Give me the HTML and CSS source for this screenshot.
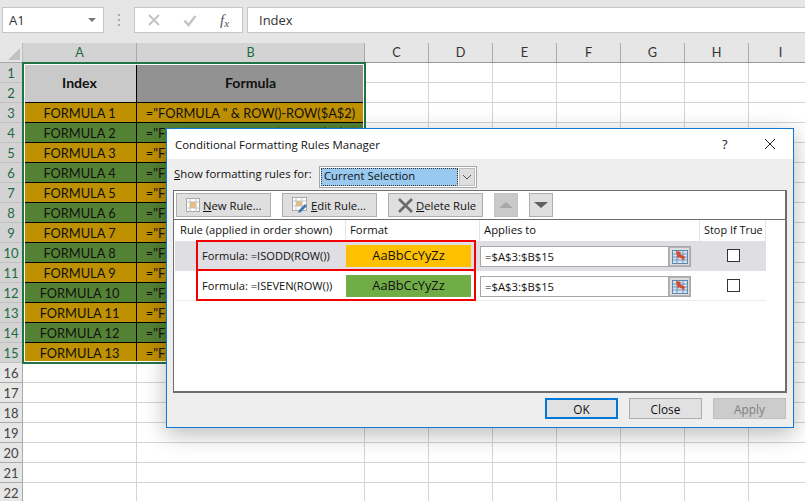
FILE: index.html
```html
<!DOCTYPE html>
<html lang="en">
<head>
<meta charset="utf-8">
<title>Conditional Formatting Rules Manager</title>
<link rel="stylesheet" href="styles.css">
</head>
<body>
<div class="app">
  <header class="formula-bar">
    <div class="name-box"><span>A1</span><i class="caret"></i></div>
    <div class="grip"><i></i><i></i><i></i></div>
    <div class="fx-box">
      <svg class="fx-icon" width="14" height="14" viewBox="0 0 14 14"><path d="M2 2l10 10M12 2L2 12" stroke="#c4c4c4" stroke-width="2" fill="none"/></svg>
      <svg class="fx-icon" width="14" height="14" viewBox="0 0 14 14"><path d="M1.500 7.500l4 4.500 7-9" stroke="#c4c4c4" stroke-width="2.500" fill="none"/></svg>
      <span class="fx">f<sub>x</sub></span>
    </div>
    <div class="formula-input">Index</div>
  </header>

  <main class="sheet">
    <div class="corner"><i></i></div>
    <div class="ch sel">A</div><div class="ch sel">B</div>
    <div class="ch-rest"><span>C</span><span>D</span><span>E</span><span>F</span><span>G</span><span>H</span><span>I</span></div>

    <div class="rh sel">1</div>
    <div class="c head-a span2">Index</div><div class="c head-b span2">Formula</div><div class="rest"></div>
    <div class="rh sel">2</div><div class="rest"></div>

    <div class="rh sel">3</div><div class="c gold">FORMULA 1</div><div class="c gold">="FORMULA " &amp; ROW()-ROW($A$2)</div><div class="rest"></div>
    <div class="rh sel">4</div><div class="c green">FORMULA 2</div><div class="c green">="FORMULA " &amp; ROW()-ROW($A$2)</div><div class="rest"></div>
    <div class="rh sel">5</div><div class="c gold">FORMULA 3</div><div class="c gold">="FORMULA " &amp; ROW()-ROW($A$2)</div><div class="rest"></div>
    <div class="rh sel">6</div><div class="c green">FORMULA 4</div><div class="c green">="FORMULA " &amp; ROW()-ROW($A$2)</div><div class="rest"></div>
    <div class="rh sel">7</div><div class="c gold">FORMULA 5</div><div class="c gold">="FORMULA " &amp; ROW()-ROW($A$2)</div><div class="rest"></div>
    <div class="rh sel">8</div><div class="c green">FORMULA 6</div><div class="c green">="FORMULA " &amp; ROW()-ROW($A$2)</div><div class="rest"></div>
    <div class="rh sel">9</div><div class="c gold">FORMULA 7</div><div class="c gold">="FORMULA " &amp; ROW()-ROW($A$2)</div><div class="rest"></div>
    <div class="rh sel">10</div><div class="c green">FORMULA 8</div><div class="c green">="FORMULA " &amp; ROW()-ROW($A$2)</div><div class="rest"></div>
    <div class="rh sel">11</div><div class="c gold">FORMULA 9</div><div class="c gold">="FORMULA " &amp; ROW()-ROW($A$2)</div><div class="rest"></div>
    <div class="rh sel">12</div><div class="c green">FORMULA 10</div><div class="c green">="FORMULA " &amp; ROW()-ROW($A$2)</div><div class="rest"></div>
    <div class="rh sel">13</div><div class="c gold">FORMULA 11</div><div class="c gold">="FORMULA " &amp; ROW()-ROW($A$2)</div><div class="rest"></div>
    <div class="rh sel">14</div><div class="c green">FORMULA 12</div><div class="c green">="FORMULA " &amp; ROW()-ROW($A$2)</div><div class="rest"></div>
    <div class="rh sel">15</div><div class="c gold">FORMULA 13</div><div class="c gold">="FORMULA " &amp; ROW()-ROW($A$2)</div><div class="rest"></div>

    <div class="rh">16</div><div class="c"></div><div class="c"></div><div class="rest"></div>
    <div class="rh">17</div><div class="c"></div><div class="c"></div><div class="rest"></div>
    <div class="rh">18</div><div class="c"></div><div class="c"></div><div class="rest"></div>
    <div class="rh">19</div><div class="c"></div><div class="c"></div><div class="rest"></div>
    <div class="rh">20</div><div class="c"></div><div class="c"></div><div class="rest"></div>
    <div class="rh">21</div><div class="c"></div><div class="c"></div><div class="rest"></div>
    <div class="rh">22</div><div class="c"></div><div class="c"></div><div class="rest"></div>

    <div class="selection"></div>
  </main>

  <section class="dialog">
    <div class="titlebar">
      <span class="title">Conditional Formatting Rules Manager</span>
      <span class="help">?</span>
      <svg class="close-x" width="12" height="12" viewBox="0 0 12 12"><path d="M1 1l10 10M11 1L1 11" stroke="#222" stroke-width="1" fill="none"/></svg>
    </div>
    <div class="dialog-body">
      <div class="show-row">
        <label class="show-label"><u>S</u>how formatting rules for:</label>
        <div class="select">
          <span class="select-value">Current Selection</span>
          <span class="select-btn"><svg width="10" height="6" viewBox="0 0 10 6"><path d="M1 1l4 4 4-4" stroke="#555" fill="none"/></svg></span>
        </div>
      </div>

      <div class="panel">
        <div class="toolbar">
          <button class="tbtn">
            <svg width="14" height="14" viewBox="0 0 14 14"><rect x="0.500" y="0.500" width="13" height="13" fill="#fff" stroke="#a8a8a8"/><rect x="4" y="4" width="6" height="6" fill="#e8bd72"/><path d="M0.500 4h13M0.500 10h13M4 .5v13M10 .5v13" stroke="#c4c4c4"/></svg>
            <span><u>N</u>ew Rule...</span>
          </button>
          <button class="tbtn">
            <svg width="16" height="16" viewBox="0 0 16 16"><rect x="0.500" y="0.500" width="14" height="13" fill="#fff" stroke="#a8a8a8"/><rect x="4" y="4" width="6" height="5" fill="#e8bd72"/><path d="M0.500 4h14M0.500 9h14M4 .5v13M10 .5v13" stroke="#c4c4c4"/><path d="M6 16l1-3 6-6 2 2-6 6z" fill="#3f78b5"/></svg>
            <span><u>E</u>dit Rule...</span>
          </button>
          <button class="tbtn">
            <svg width="15" height="15" viewBox="0 0 15 15"><path d="M1 1l13 13M14 1L1 14" stroke="#6b6b6b" stroke-width="2.600" fill="none"/></svg>
            <span><u>D</u>elete Rule</span>
          </button>
          <button class="abtn off"><i class="tri up"></i></button>
          <button class="abtn"><i class="tri down"></i></button>
        </div>

        <div class="rules">
          <div class="th">Rule (applied in order shown)</div>
          <div class="th">Format</div>
          <div class="th">Applies to</div>
          <div class="th">Stop If True</div>

          <div class="td current rule">Formula: =ISODD(ROW())</div>
          <div class="td current"><div class="swatch amber">AaBbCcYyZz</div></div>
          <div class="td current"><div class="range"><span class="range-text">=$A$3:$B$15</span><span class="range-btn"><svg width="16" height="14" viewBox="0 0 16 14"><rect x="0.500" y="0.500" width="15" height="13" fill="#d5e4f0" stroke="#5e87ab"/><path d="M.5 4h15M.5 7h15M.5 10h15M5 .5v13M11 .5v13" stroke="#6f97ba"/><path d="M4 1l5 1-1 2 5 3-1 3-5-3-1 2z" fill="#d8482a"/></svg></span></div></div>
          <div class="td current center"><i class="check"></i></div>

          <div class="td rule">Formula: =ISEVEN(ROW())</div>
          <div class="td"><div class="swatch leaf">AaBbCcYyZz</div></div>
          <div class="td"><div class="range"><span class="range-text">=$A$3:$B$15</span><span class="range-btn"><svg width="16" height="14" viewBox="0 0 16 14"><rect x="0.500" y="0.500" width="15" height="13" fill="#d5e4f0" stroke="#5e87ab"/><path d="M.5 4h15M.5 7h15M.5 10h15M5 .5v13M11 .5v13" stroke="#6f97ba"/><path d="M4 1l5 1-1 2 5 3-1 3-5-3-1 2z" fill="#d8482a"/></svg></span></div></div>
          <div class="td center"><i class="check"></i></div>
        </div>
      </div>

      <div class="actions">
        <button class="btn primary">OK</button>
        <button class="btn">Close</button>
        <button class="btn disabled">Apply</button>
      </div>
    </div>
    <div class="mark mark-one"></div>
    <div class="mark mark-two"></div>
  </section>
</div>
</body>
</html>
```
FILE: styles.css
```css
* { box-sizing: border-box; }
html, body { margin: 0; padding: 0; }
body { width: 805px; height: 501px; overflow: hidden; background: #fff; }
.app { position: relative; width: 805px; height: 501px; overflow: hidden; font-family: "Lato", "Liberation Sans", sans-serif; color: #111; }

/* Formula bar */
.formula-bar { height: 43px; background: #e6e6e6; display: flex; align-items: flex-start; padding: 7px 0 0 2px; }
.name-box { width: 102px; height: 26px; background: #fff; border: 1px solid #c6c6c6; display: flex; align-items: center; justify-content: space-between; padding: 0 7px 0 6px; font: 13px "Open Sans", sans-serif; color: #333; }
.caret { width: 0; height: 0; border-left: 4px solid transparent; border-right: 4px solid transparent; border-top: 4px solid #777; }
.grip { width: 30px; display: flex; flex-direction: column; align-items: center; gap: 3px; padding-top: 7px; }
.grip i { width: 2px; height: 2px; background: #aaa; }
.fx-box { width: 109px; height: 26px; background: #fff; border: 1px solid #c6c6c6; display: flex; align-items: center; padding-left: 12px; gap: 22px; }
.fx { font: italic 15px "Liberation Serif", serif; color: #555; margin-left: 1px; }
.fx sub { font-size: 11px; vertical-align: -2px; line-height: 0; }
.formula-input { flex: 1; height: 26px; margin-left: 4px; background: #fff; border: 1px solid #c6c6c6; border-right: 0; padding-left: 11px; font: 13px/24px "Open Sans", sans-serif; color: #333; }

/* Sheet */
.sheet { position: relative; display: grid; grid-template-columns: 23px 114px 228px 440px; grid-template-rows: repeat(23, 20px); font-size: 12.800px; }
.corner { background: #e6e6e6; border-bottom: 1px solid #aaa; border-right: 1px solid #bbb; position: relative; }
.corner i { position: absolute; right: 2px; bottom: 2px; width: 0; height: 0; border-left: 12px solid transparent; border-bottom: 12px solid #c2c2c2; }
.ch { background: #e6e6e6; border-bottom: 1px solid #999; border-right: 1px solid #aaa; text-align: center; line-height: 19px; color: #333; font-size: 12.700px; }
.ch.sel { background: #d3d3d3; color: #1d6a43; }
.ch-rest { background: #e6e6e6; border-bottom: 1px solid #999; display: grid; grid-template-columns: repeat(7, 64px); overflow: hidden; }
.ch-rest span { border-right: 1px solid #aaa; text-align: center; line-height: 19px; color: #333; font-size: 12.700px; }
.rh { background: #e6e6e6; border-right: 1px solid #aaa; border-bottom: 1px solid #aaa; text-align: center; line-height: 20px; color: #444; font-size: 13px; }
.rh.sel { background: #d3d3d3; color: #1d6a43; border-bottom-color: #c0c0c0; }
.c { border-right: 1px solid #d4d4d4; border-bottom: 1px solid #d4d4d4; text-align: center; line-height: 20px; white-space: nowrap; overflow: hidden; color: #111; }
.span2 { grid-row: span 2; line-height: 39px; font-size: 14.100px; font-weight: 700; border-color: #000; }
.head-a { background: #c9c9c9; }
.head-b { background: #929292; }
.gold { background: #bf9000; border-color: #000; }
.green { background: #548235; border-color: #000; }
.rest { border-bottom: 1px solid #d4d4d4; background-image: repeating-linear-gradient(to right, transparent 0, transparent 63px, #d4d4d4 63px, #d4d4d4 64px); }
.selection { position: absolute; left: 22px; top: 19px; width: 344px; height: 302px; border: 2px solid #217346; box-shadow: inset 0 0 0 1px #fff; pointer-events: none; }

/* Dialog */
.dialog { position: absolute; left: 166px; top: 128px; width: 628px; height: 300px; background: #eee; border: 1px solid #0f7ad6; box-shadow: 0 6px 22px rgba(0, 0, 0, 0.28); font: 11.300px "Open Sans", "Liberation Sans", sans-serif; color: #111; display: flex; flex-direction: column; }
.titlebar { height: 30px; flex: none; background: #fff; display: flex; align-items: center; padding-left: 8px; }
.title { flex: 1; font-size: 11.450px; }
.help { width: 42px; font-size: 13px; color: #222; }
.close-x { margin-right: 17px; }
.dialog-body { flex: 1; display: flex; flex-direction: column; padding: 7px 6px 0; }
.show-row { display: flex; align-items: flex-start; height: 24px; }
.show-label { width: 146px; padding-left: 1px; line-height: 16px; white-space: nowrap; }
.select { width: 158px; height: 22px; background: #fff; border: 1px solid #a6a6a6; display: flex; padding: 1px; }
.select-value { width: 137px; background: #99c9ef; outline: 1px dotted #333; outline-offset: -1px; padding-left: 3px; line-height: 16px; }
.select-btn { flex: 1; margin-left: 1px; background: #dedede; border: 1px solid #bdbdbd; display: flex; align-items: center; justify-content: center; }
.panel { width: 614px; height: 203px; background: #fff; border: 2px solid #6d6d6d; border-width: 1px 2px 2px 1px; display: flex; flex-direction: column; }
.toolbar { height: 29px; flex: none; border-bottom: 1px solid #6d6d6d; display: flex; align-items: flex-start; padding: 2px 0 0 2px; gap: 11px; }
.tbtn { width: 95px; height: 24px; padding: 0 0 0 9px; background: #dfdfdf; border: 1px solid #adadad; display: flex; align-items: center; gap: 3px; font: 11.300px "Open Sans", sans-serif; color: #111; white-space: nowrap; }
.abtn { width: 24px; height: 24px; padding: 0; background: #dfdfdf; border: 1px solid #adadad; display: flex; align-items: center; justify-content: center; }
.abtn.off { background: #c9c9c9; border-color: #c2c2c2; }
.tri { width: 0; height: 0; border-left: 7px solid transparent; border-right: 7px solid transparent; }
.tri.up { border-bottom: 6px solid #a8a8a8; }
.tri.down { border-top: 6px solid #5f5f5f; }
.rules { display: grid; grid-template-columns: 171px 134px 220px 66px; grid-template-rows: 21px 30px 30px; margin-left: 1px; }
.th { border-right: 1px solid #e4e4e4; padding-left: 4px; line-height: 20px; white-space: nowrap; }
.th:first-child { padding-left: 5px; font-size: 11.150px; }
.th:nth-child(4) { font-size: 10.900px; }
.td { display: flex; align-items: center; border-bottom: 1px solid #ececf0; }
.td.current { background: #dedee3; border-bottom-color: #dedee3; }
.rule { padding-left: 27px; font-size: 11.100px; white-space: nowrap; }
.swatch { width: 125px; height: 22px; text-align: center; font: 12.800px/21px "Open Sans", sans-serif; }
.amber { background: #ffc000; }
.leaf { background: #70ad47; }
.range { width: 211px; height: 21px; margin-top: 2px; background: #fff; border: 1px solid #a8a8a8; display: flex; }
.range-text { flex: 1; padding-left: 4px; line-height: 19px; }
.range-btn { width: 22px; background: #dedede; border-left: 1px solid #a8a8a8; display: flex; align-items: center; justify-content: center; box-shadow: inset 0 0 0 1px #b4b4b4; }
.center { justify-content: center; }
.check { width: 13px; height: 13px; background: #fff; border: 1px solid #333; }
.actions { display: flex; justify-content: flex-end; gap: 11px; padding: 5px 1px 0 0; }
.btn { width: 73px; height: 21px; padding: 0; background: #e1e1e1; border: 1px solid #adadad; font: 11.800px "Open Sans", sans-serif; color: #111; }
.primary { border: 2px solid #0078d7; }
.disabled { background: #cccccc; border-color: #bfbfbf; color: #808080; }
.mark { position: absolute; left: 29px; width: 280px; border: 2px solid #f00000; pointer-events: none; }
.mark-one { top: 111px; height: 31px; }
.mark-two { top: 140px; height: 32px; }
```
